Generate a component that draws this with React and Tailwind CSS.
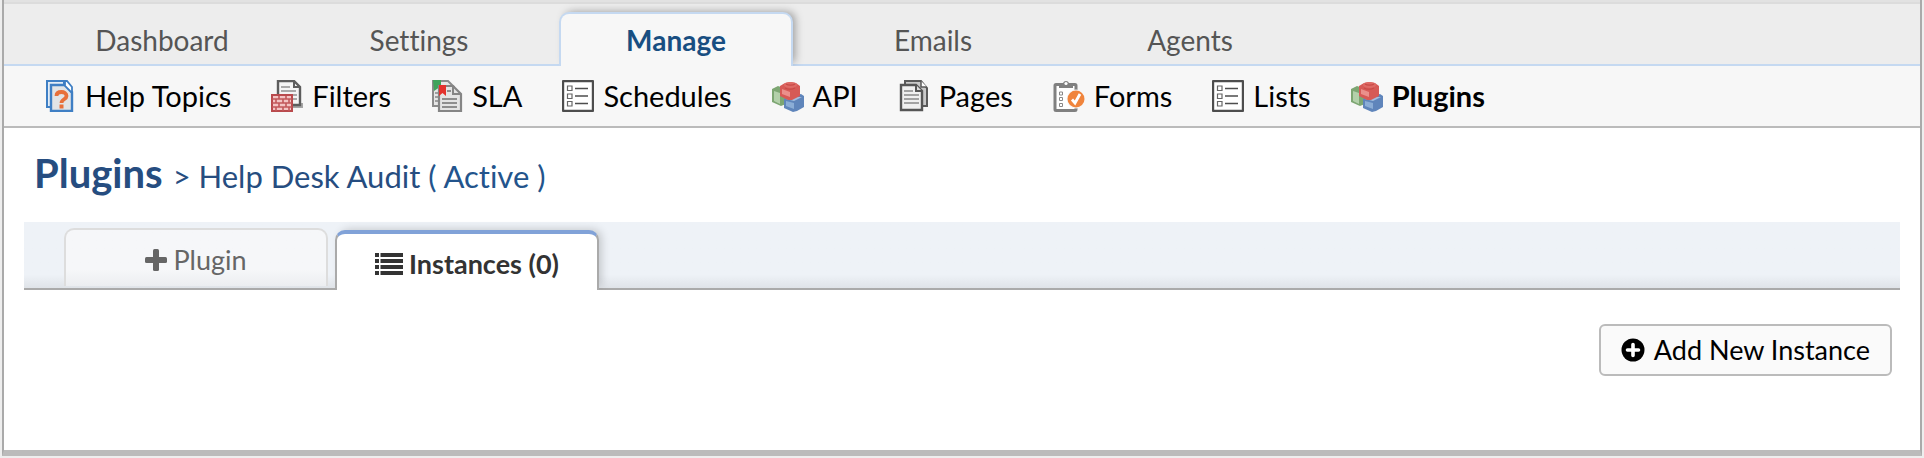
import React from 'react';

function Svg({ children }) {
  return (
    <svg viewBox="0 0 32 32" className="h-8 w-8 shrink-0" fill="none" aria-hidden="true">
      {children}
    </svg>
  );
}

function HelpIcon() {
  return (
    <Svg>
      <path d="M3 1h17v26H3z" fill="#e3edf7" stroke="#3f7fc4" strokeWidth="2" />
      <path d="M7 5h14l7 7v19H7z" fill="#e2e4e6" stroke="#3f7fc4" strokeWidth="2.400" />
      <path d="M21 1v5l6 6h1V7l-5-6z" fill="#fff" stroke="#3f7fc4" strokeWidth="1.800" />
      <path d="M12.500 16c0-3.500 2.500-4 5-4s5 1.500 5 4c0 3.500-5 3-5 7" stroke="#e8703a" strokeWidth="3.800" />
      <path d="M15.500 24.500h4v4h-4z" fill="#e8703a" />
    </Svg>
  );
}

function FilterIcon() {
  return (
    <Svg>
      <path d="M9 28h23v-5h-3z" fill="#a5a5a5" />
      <path d="M7 1h16l6 6v18H7z" fill="#f4f4f4" stroke="#5d5d5d" strokeWidth="2.400" />
      <path d="M23 1v6h6" stroke="#5d5d5d" strokeWidth="2" />
      <path d="M10 7h9M10 11h15M22 15h4M22 19h4" stroke="#a9a9a9" strokeWidth="1.800" />
      <path d="M1 15h20v16H1z" fill="#f3c4c4" stroke="#b94a4d" strokeWidth="2" />
      <path d="M1 19h20M1 23h20M1 27h20M8 16v3M15 16v3M5 19v4M12 19v4M18 19v4M8 23v4M15 23v4M5 27v4M12 27v4M18 27v4" stroke="#c2585b" strokeWidth="1.600" />
    </Svg>
  );
}

function SlaIcon() {
  return (
    <Svg>
      <path d="M2 1h15l6 6v19H2z" fill="#e6e6e6" stroke="#8b8b8b" strokeWidth="2" />
      <path d="M4 13h4M4 17h4M4 21h4" stroke="#888" strokeWidth="1.500" />
      <path d="M2 0h8v6L6 9 3 11z" fill="#3fa35b" />
      <path d="M8 6h14l8 8v17H8z" fill="#e4e4e4" stroke="#858585" strokeWidth="2.200" />
      <path d="M22 7v7h7" stroke="#858585" strokeWidth="2" />
      <path d="M16 11h4M11 19h15M11 23h15M11 27h15" stroke="#8e8e8e" strokeWidth="2" />
      <path d="M8 5h7v11l-3.500-3L8 16z" fill="#e3322d" />
    </Svg>
  );
}

function ListIcon() {
  return (
    <Svg>
      <rect x="1" y="1" width="30" height="30" rx="1" fill="#fff" stroke="#4d4d4d" strokeWidth="2.400" />
      <path d="M5.500 6h4.500v4.500H5.500zM5.500 14h4.500v4.500H5.500zM5.500 21.500h4.500V26H5.500z" stroke="#666" strokeWidth="1.200" />
      <path d="M13 8.500h13M13 16h13M13 23.500h13" stroke="#4d4d4d" strokeWidth="1.500" />
    </Svg>
  );
}

function BricksIcon() {
  return (
    <Svg>
      <path d="M0 9l6-3 8 3v15l-5 2-9-4z" fill="#7da672" />
      <path d="M2 11l6 2v11l-6-3z" fill="#b3d0aa" />
      <path d="M12 19l8-3 9-2 3 2v11l-7 4-4 1-9-4z" fill="#5f85bb" />
      <path d="M14 21l8 2v6l-8-3z" fill="#8badd6" />
      <path d="M14 19l7-2h9l-8 4z" fill="#a3bede" />
      <path d="M8 6l5-3 5-1 6 1 4 3v10l-8 4h-4l-8-4z" fill="#d65a56" />
      <path d="M10 9l8 3v5l-8-3z" fill="#ea908b" />
      <path d="M12 5c0-4 13-4 13 0s-13 4-13 0z" fill="#de6a65" />
      <path d="M14 4c2 1.500 7 1.500 9 0M13 8c3 1.500 7 1.500 10 0" stroke="#c94a47" strokeWidth="1.200" />
    </Svg>
  );
}

function PagesIcon() {
  return (
    <Svg>
      <path d="M7 1h16l6 7v18H7z" fill="#c9c9c9" stroke="#5a5a5a" strokeWidth="2" />
      <path d="M23 1v6h6" fill="#fff" stroke="#5a5a5a" strokeWidth="1.500" />
      <path d="M3 5h15l6 6v19H3z" fill="#f0f0f0" stroke="#555" strokeWidth="2.400" />
      <path d="M18 5v6h6" fill="#ddd" stroke="#555" strokeWidth="2" />
      <path d="M6 11h9M6 15h15M6 19h15M6 23h15" stroke="#a3a3a3" strokeWidth="2" />
    </Svg>
  );
}

function FormsIcon() {
  return (
    <Svg>
      <rect x="2" y="4.500" width="21" height="26" rx="1" fill="#fff" stroke="#808080" strokeWidth="3" />
      <path d="M6 4l4-1a3.200 3.200 0 0 1 6 0l4 1v4H6z" fill="#808080" />
      <circle cx="13" cy="3.500" r="1.600" fill="#fff" />
      <path d="M6.500 12h3v3h-3zM6.500 17.500h3v3h-3zM6.500 23.500h3v3h-3z" stroke="#888" />
      <circle cx="23" cy="19" r="9.500" fill="#f7f7f7" />
      <circle cx="23" cy="19" r="8.500" fill="#f0843c" />
      <path d="M19 19.500l3 3.500 5-9" stroke="#fff" strokeWidth="2.800" />
    </Svg>
  );
}

function PlusIcon() {
  return (
    <svg viewBox="0 0 22 22" className="h-[22px] w-[22px] shrink-0" fill="currentColor" aria-hidden="true">
      <rect x="0" y="8" width="22" height="6" rx="1.500" />
      <rect x="8" y="0" width="6" height="22" rx="1.500" />
    </svg>
  );
}

function BarsIcon() {
  return (
    <svg viewBox="0 0 28 22" className="h-[22px] w-7 shrink-0" fill="currentColor" aria-hidden="true">
      <path d="M0 0h4v4H0zM5.500 0H28v4H5.500zM0 6h4v4H0zM5.500 6H28v4H5.500zM0 12h4v4H0zM5.500 12H28v4H5.500zM0 18h4v4H0zM5.500 18H28v4H5.500z" />
    </svg>
  );
}

function PlusCircleIcon() {
  return (
    <svg viewBox="0 0 24 24" className="h-6 w-6 shrink-0" aria-hidden="true">
      <circle cx="12" cy="12" r="11.500" fill="#000" />
      <path d="M12 6.500v11M6.500 12h11" stroke="#fff" strokeWidth="3.600" strokeLinecap="round" />
    </svg>
  );
}

const tabs = ['Dashboard', 'Settings', 'Manage', 'Emails', 'Agents'];

const links = [
  ['Help Topics', HelpIcon],
  ['Filters', FilterIcon],
  ['SLA', SlaIcon],
  ['Schedules', ListIcon],
  ['API', BricksIcon],
  ['Pages', PagesIcon],
  ['Forms', FormsIcon],
  ['Lists', ListIcon],
  ['Plugins', BricksIcon],
];

export default function App() {
  return (
    <div className="bg-[#eee] px-0.5 pb-0.5 font-['Lato',sans-serif] text-[28px] leading-8 text-black [font-variant-ligatures:none]">
      <div className="border-x-2 border-b-[6px] border-x-[#aaa] border-b-[#bbb] bg-white">
        <div className="h-1 border-b-2 border-[#dcdcdc] bg-[#e2e2e2]" />
        <nav className="flex h-[62px] items-end gap-[23px] border-b-2 border-[#c5d9f1] bg-[#ededed] pl-[41px]">
          {tabs.map((t) => (
            <a
              key={t}
              href="#"
              className={
                t === 'Manage'
                  ? '-mb-0.5 flex h-[54px] w-[234px] justify-center rounded-t-[10px] border-2 border-b-0 border-[#c5d9f1] bg-[#f7f7f7] pt-2.5 font-bold text-[#184e81] shadow-[4px_-2px_8px_-2px_rgba(0,0,0,0.35)] [clip-path:inset(-12px_-12px_0_-12px)]'
                  : 'flex h-[52px] w-[234px] justify-center pt-3 text-[#555]'
              }
            >
              {t}
            </a>
          ))}
        </nav>
        <nav className="flex h-[62px] items-center gap-10 border-b-2 border-[#bbb] bg-[#f7f7f7] pl-10 text-[29px]">
          {links.map(([label, Icon]) => (
            <a key={label} href="#" className={label === 'Plugins' ? 'flex items-center gap-[9px] font-bold' : 'flex items-center gap-[9px]'}>
              <Icon />
              {label}
            </a>
          ))}
        </nav>
        <main className="px-5 pb-[74px] pt-[18px]">
          <h1 className="flex h-[54px] items-baseline gap-2.5 pl-2.5 leading-[54px] text-[#264d80]">
            <a href="#" className="text-[40px] font-bold">Plugins</a>
            <span className="text-[31px]">
              &gt; Help Desk Audit <span className="text-[#23548c]">( Active )</span>
            </span>
          </h1>
          <div className="mt-[22px] flex h-[68px] items-end gap-[7px] border-b-2 border-[#aaa] bg-linear-to-b from-[#eef2f7] from-80% to-[#dfe3e8] pl-10 text-[27px]">
            <button
              type="button"
              className="mb-0.5 flex h-[58px] w-[264px] items-center justify-center gap-1.5 rounded-t-[10px] border-2 border-b-0 border-[#ddd] bg-linear-to-b from-[#f6f7f9] from-70% to-[#eceef1] pt-1 text-[#666]"
            >
              <PlusIcon />
              Plugin
            </button>
            <button
              type="button"
              className="-mb-0.5 flex h-[60px] w-[264px] items-center justify-center gap-1.5 rounded-t-[10px] border-x-2 border-t-4 border-x-[#aaa] border-t-[#81a2d8] bg-white pt-1 font-bold text-[#333] shadow-[4px_-2px_10px_-2px_rgba(0,0,0,0.2)] [clip-path:inset(-12px_-16px_0_-12px)]"
            >
              <BarsIcon />
              Instances (0)
            </button>
          </div>
          <div className="mt-[34px] flex justify-end pr-2">
            <button type="button" className="flex h-[52px] items-center gap-[9px] rounded-md border-2 border-[#bbb] bg-[#fafafa] px-5 text-[27px]">
              <PlusCircleIcon />
              Add New Instance
            </button>
          </div>
        </main>
      </div>
    </div>
  );
}
